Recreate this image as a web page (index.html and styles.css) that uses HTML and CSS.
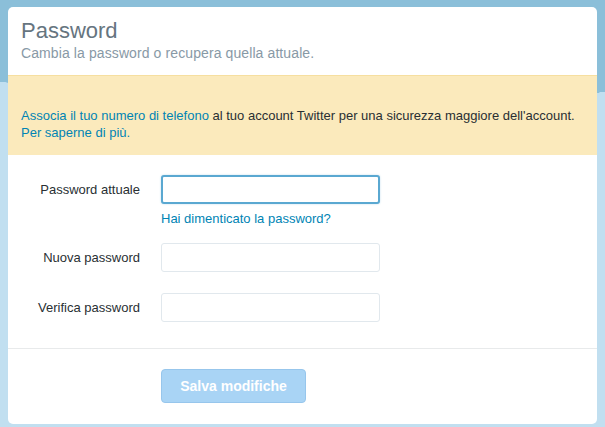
FILE: index.html
```html
<!DOCTYPE html>
<html lang="it">
<head>
    <meta charset="UTF-8">
    <meta name="viewport" content="width=device-width, initial-scale=1.0">
    <title>Password</title>
    <link rel="stylesheet" href="styles.css">
</head>
<body>
    <div class="card">
        <div class="header">
            <h1>Password</h1>
            <p>Cambia la password o recupera quella attuale.</p>
        </div>

        <div class="notice">
            <a href="#">Associa il tuo numero di telefono</a> al tuo account Twitter per una sicurezza maggiore dell'account.
            <a href="#">Per saperne di più.</a>
        </div>

        <form class="fields" action="javascript:void(0);">
            <div class="row">
                <label for="current">Password attuale</label>
                <div class="control">
                    <input type="password" id="current" class="focused">
                    <a href="#" class="forgot">Hai dimenticato la password?</a>
                </div>
            </div>
            <div class="row">
                <label for="newpw">Nuova password</label>
                <div class="control">
                    <input type="password" id="newpw">
                </div>
            </div>
            <div class="row">
                <label for="verify">Verifica password</label>
                <div class="control">
                    <input type="password" id="verify">
                </div>
            </div>
        </form>

        <div class="actions">
            <button type="submit" disabled>Salva modifiche</button>
        </div>
    </div>
</body>
</html>
```

FILE: styles.css
```css
body {
    font-family: "Liberation Sans", Arial, sans-serif;
    margin: 0;
    padding: 7px 8px 3px;
    background-color: #c1dff0;
    background-image:
        radial-gradient(ellipse 30px 14px at 0 96px, #c1dff0 98%, transparent 100%),
        radial-gradient(ellipse 20px 10px at 605px 102px, #c1dff0 98%, transparent 100%),
        linear-gradient(#8bbfd9 0, #8bbfd9 96px, #c1dff0 96px);
    background-repeat: no-repeat;
    height: 417px;
    overflow: hidden;
}

a {
    color: #0084b4;
    text-decoration: none;
}

.card {
    background-color: #fff;
    border-radius: 5px;
    width: 589px;
    height: 417px;
    box-sizing: border-box;
}

.header {
    padding: 10px 13px 0;
    height: 68px;
    box-sizing: border-box;
}

h1 {
    margin: 0;
    font-size: 22px;
    font-weight: normal;
    color: #66757f;
    line-height: 28px;
}

.header p {
    margin: 0;
    font-size: 14px;
    color: #8899a6;
    line-height: 17px;
    letter-spacing: 0.1px;
}

.notice {
    background-color: #fbeabc;
    border-top: 1px solid #f6dfa0;
    height: 80px;
    box-sizing: border-box;
    padding: 31px 13px 0;
    font-size: 13px;
    line-height: 17px;
    color: #292f33;
}

.fields {
    padding-top: 20px;
    height: 194px;
    box-sizing: border-box;
    border-bottom: 1px solid #e8eaeb;
}

.row {
    display: grid;
    grid-template-columns: 120px 219px;
    column-gap: 21px;
    padding-left: 12px;
    margin-bottom: 21px;
}

.row:first-child {
    margin-bottom: 16px;
}

label {
    text-align: right;
    font-size: 13px;
    color: #292f33;
    line-height: 29px;
}

input {
    width: 219px;
    height: 29px;
    box-sizing: border-box;
    border: 1px solid #e1e8ed;
    border-radius: 3px;
    display: block;
    margin: 0;
    padding: 4px 6px;
    font-size: 13px;
}

input.focused {
    border: 2px solid #5aa8d1;
    box-shadow: 0 0 2px rgba(90, 168, 209, 0.4);
}

.forgot {
    display: block;
    font-size: 13px;
    line-height: 16px;
    margin-top: 7px;
}

.actions {
    padding: 20px 0 0 153px;
}

button {
    width: 145px;
    height: 34px;
    background-color: #a9d4f5;
    border: 1px solid #97c6ec;
    border-radius: 4px;
    color: #fff;
    font-family: "Liberation Sans", Arial, sans-serif;
    font-weight: bold;
    font-size: 14px;
    padding: 0;
}
```
